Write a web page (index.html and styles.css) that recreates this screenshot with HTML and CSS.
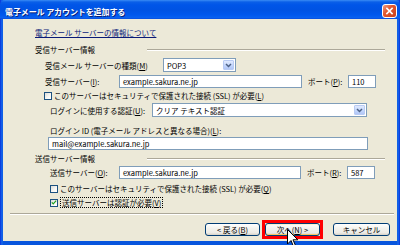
FILE: index.html
```html
<!DOCTYPE html>
<html lang="ja">
<head>
<meta charset="utf-8">
<link rel="stylesheet" href="styles.css">
</head>
<body>
<div class="window">
  <div class="titlebar">
    <span class="title">電子メール アカウントを追加する</span>
    <span class="close"><svg viewBox="0 0 14 14" width="14" height="14"><path d="M4.2 4.2 L9.8 9.8 M9.8 4.2 L4.2 9.8" stroke="#fff" stroke-width="1.7" stroke-linecap="square"/></svg></span>
  </div>
  <div class="body">
    <div class="row link-row"><a class="link">電子メール サーバーの情報について</a></div>
    <div class="group g1"><span class="gtitle">受信サーバー情報</span><span class="gline"></span></div>

    <div class="row r1 ind1">
      <span class="lbl w118">受信メール サーバーの種類(<u>M</u>)</span>
      <span class="combo w73"><span class="val">POP3</span><span class="dd"><svg viewBox="0 0 9 9" width="9" height="9"><path d="M2 3 L4.5 5.5 L7 3" fill="none" stroke="#4D6185" stroke-width="1.5"/></svg></span></span>
    </div>
    <div class="row r2 ind1">
      <span class="lbl w74">受信サーバー(<u>I</u>):</span>
      <span class="field w183">example.sakura.ne.jp</span>
      <span class="lbl port">ポート(<u>P</u>):</span>
      <span class="field w28">110</span>
    </div>
    <div class="row r3 ind0">
      <span class="check"></span>
      <span class="lbl">このサーバーはセキュリティで保護された接続 (SSL) が必要(<u>L</u>)</span>
    </div>
    <div class="row r4 ind2">
      <span class="lbl w102">ログインに使用する認証(<u>U</u>):</span>
      <span class="combo w215"><span class="val">クリア テキスト認証</span><span class="dd"><svg viewBox="0 0 9 9" width="9" height="9"><path d="M2 3 L4.5 5.5 L7 3" fill="none" stroke="#4D6185" stroke-width="1.5"/></svg></span></span>
    </div>
    <div class="row r5 ind2">
      <span class="lbl">ログイン ID (電子メール アドレスと異なる場合)(<u>L</u>):</span>
    </div>
    <div class="row r6 ind3">
      <span class="field w320">mail@example.sakura.ne.jp</span>
    </div>

    <div class="group g2"><span class="gtitle">送信サーバー情報</span><span class="gline"></span></div>

    <div class="row r7 ind2">
      <span class="lbl w69">送信サーバー(<u>O</u>):</span>
      <span class="field w182">example.sakura.ne.jp</span>
      <span class="lbl port">ポート(<u>R</u>):</span>
      <span class="field w28">587</span>
    </div>
    <div class="row r8 ind2">
      <span class="check"></span>
      <span class="lbl">このサーバーはセキュリティで保護された接続 (SSL) が必要(<u>Q</u>)</span>
    </div>
    <div class="row r9 ind2">
      <span class="check checked"><svg viewBox="0 0 9 9" width="7" height="7"><path d="M1.2 4.2 L3.4 6.6 L7.8 1.8" fill="none" stroke="#21A121" stroke-width="1.8"/></svg></span>
      <span class="lbl focus">送信サーバーは認証が必要(<u>V</u>)</span>
    </div>

    <div class="sep"></div>

    <div class="buttons">
      <span class="btn">&lt; 戻る(<u>B</u>)</span>
      <span class="mark"><span class="btn next">次へ(<u>N</u>) &gt;</span></span>
      <span class="btn cancel">キャンセル</span>
    </div>
  </div>
  <svg class="cursor" viewBox="0 0 12 19" width="12" height="19"><path d="M0.5 0.5 L0.5 15 L4 11.5 L6.5 17.5 L8.5 16.5 L6 10.8 L10.8 10.8 Z" fill="#fff" stroke="#000" stroke-width="1"/></svg>
</div>
</body>
</html>
```

FILE: styles.css
```css
* { box-sizing: border-box; }
html, body { margin: 0; padding: 0; }
body {
  width: 400px;
  height: 245px;
  overflow: hidden;
  font-family: "Noto Sans CJK JP", "Noto Sans", sans-serif;
  font-size: 7.5px;
  color: #000;
}
.window {
  position: relative;
  width: 400px;
  height: 245px;
  display: flex;
  flex-direction: column;
  background: linear-gradient(to right, #0831D9 0, #166AEE 2px, #0855DD 3px, #0855DD 397px, #166AEE 398px, #0831D9 400px);
  padding-bottom: 4px;
}
.titlebar {
  height: 19px;
  flex: none;
  display: flex;
  align-items: center;
  justify-content: space-between;
  padding: 1px 3px 0 5px;
  background: linear-gradient(to bottom, #3A8CF5 0, #0A5FE8 2px, #0055E8 5px, #0053E3 10px, #0058EE 15px, #0A62F0 18px, #0846D6 19px);
  border-radius: 5px 5px 0 0;
}
.title {
  color: #fff;
  font-weight: bold;
  font-size: 8px;
  letter-spacing: -0.1px;
  text-shadow: 1px 1px 0 #0A1E74;
  margin-top: 2px;
}
.close {
  width: 15px;
  height: 14px;
  border: 1px solid #fff;
  border-radius: 3px;
  background: linear-gradient(135deg, #F09C84 0, #E2582F 40%, #C9401A 100%);
  display: flex;
  align-items: center;
  justify-content: center;
  margin-top: 1px;
}
.close svg { display: block; }
.body {
  flex: 1;
  margin: 0 3px;
  background: #ECE9D8;
  display: flex;
  flex-direction: column;
}
.row {
  display: flex;
  align-items: center;
  white-space: nowrap;
}
.ind0 { padding-left: 41px; }
.ind1 { padding-left: 42px; }
.ind2 { padding-left: 47px; }
.ind3 { padding-left: 45px; }
.link-row { margin-top: 7px; height: 13px; padding-left: 32px; }
.link {
  color: #0A1A78;
  text-decoration: underline;
}
.group {
  display: grid;
  grid-template-columns: 112px 1fr;
  align-items: center;
  height: 13px;
  padding-left: 32px;
  padding-right: 12px;
}
.g1 { margin-top: 4px; }
.g2 { margin-top: 2px; }
.gline {
  height: 2px;
  border-top: 1px solid #ACA899;
  border-bottom: 1px solid #fff;
}
.r1 { margin-top: 2px; height: 14px; }
.r2 { margin-top: 3px; height: 13px; }
.r3 { margin-top: 1px; height: 13px; }
.r4 { margin-top: 1px; height: 14px; }
.r5 { margin-top: 7px; height: 12px; }
.r6 { margin-top: 1px; height: 13px; }
.r7 { margin-top: 1px; height: 13px; }
.r8 { margin-top: 3px; height: 13px; }
.r9 { margin-top: 1px; height: 13px; }
.lbl { flex: none; }
.w118 { width: 118px; }
.w74 { width: 74px; }
.w102 { width: 102px; }
.w69 { width: 69px; }
.port { width: 40px; margin-left: 6px; }
.field, .combo {
  flex: none;
  height: 100%;
  background: #fff;
  border: 1px solid #7F9DB9;
  display: flex;
  align-items: center;
  padding-left: 3px;
}
.w183 { width: 183px; }
.w182 { width: 182px; }
.w28 { width: 28px; }
.w320 { width: 320px; }
.w73 { width: 73px; }
.w215 { width: 215px; }
.combo { justify-content: space-between; padding-right: 1px; }
.combo .val { flex: 1; }
.dd {
  width: 11px;
  height: 10px;
  border: 1px solid #B9CBF3;
  border-radius: 1px;
  background: linear-gradient(to bottom, #E1EAFE 0, #C2D5FC 60%, #B1C6F6 100%);
  display: flex;
  align-items: center;
  justify-content: center;
}
.dd svg { display: block; }
.check {
  flex: none;
  width: 8px;
  height: 8px;
  border: 1px solid #1C5180;
  background: linear-gradient(135deg, #DCDCD7 0, #F8F8F6 60%, #fff 100%);
  margin-right: 2px;
  display: flex;
  align-items: center;
  justify-content: center;
}
.check svg { display: block; }
.focus {
  border: 1px dotted #000;
  padding: 0 1px;
  line-height: 9px;
}
.sep {
  margin: 4px 3px 0 7px;
  height: 2px;
  border-top: 1px solid #ACA899;
  border-bottom: 1px solid #fff;
}
.buttons {
  margin-top: 8px;
  display: flex;
  align-items: center;
  justify-content: flex-end;
  padding-right: 7px;
  height: 13px;
}
.btn {
  flex: none;
  width: 55px;
  height: 13px;
  border: 1px solid #003C74;
  border-radius: 3px;
  background: linear-gradient(to bottom, #FFFFFF 0, #F4F3EE 40%, #ECEBE6 80%, #D6D0C5 100%);
  display: flex;
  align-items: center;
  justify-content: center;
}
.mark {
  flex: none;
  border: 3px solid #FF0000;
  margin: -3px 0 -3px 2px;
}
.next {
  box-shadow: inset 0 -1px 0 #F8C766, inset 0 1px 0 #FFF0CF;
}
.cancel { width: 57px; margin-left: 10px; }
.cursor {
  position: absolute;
  left: 287px;
  top: 229px;
}
```
